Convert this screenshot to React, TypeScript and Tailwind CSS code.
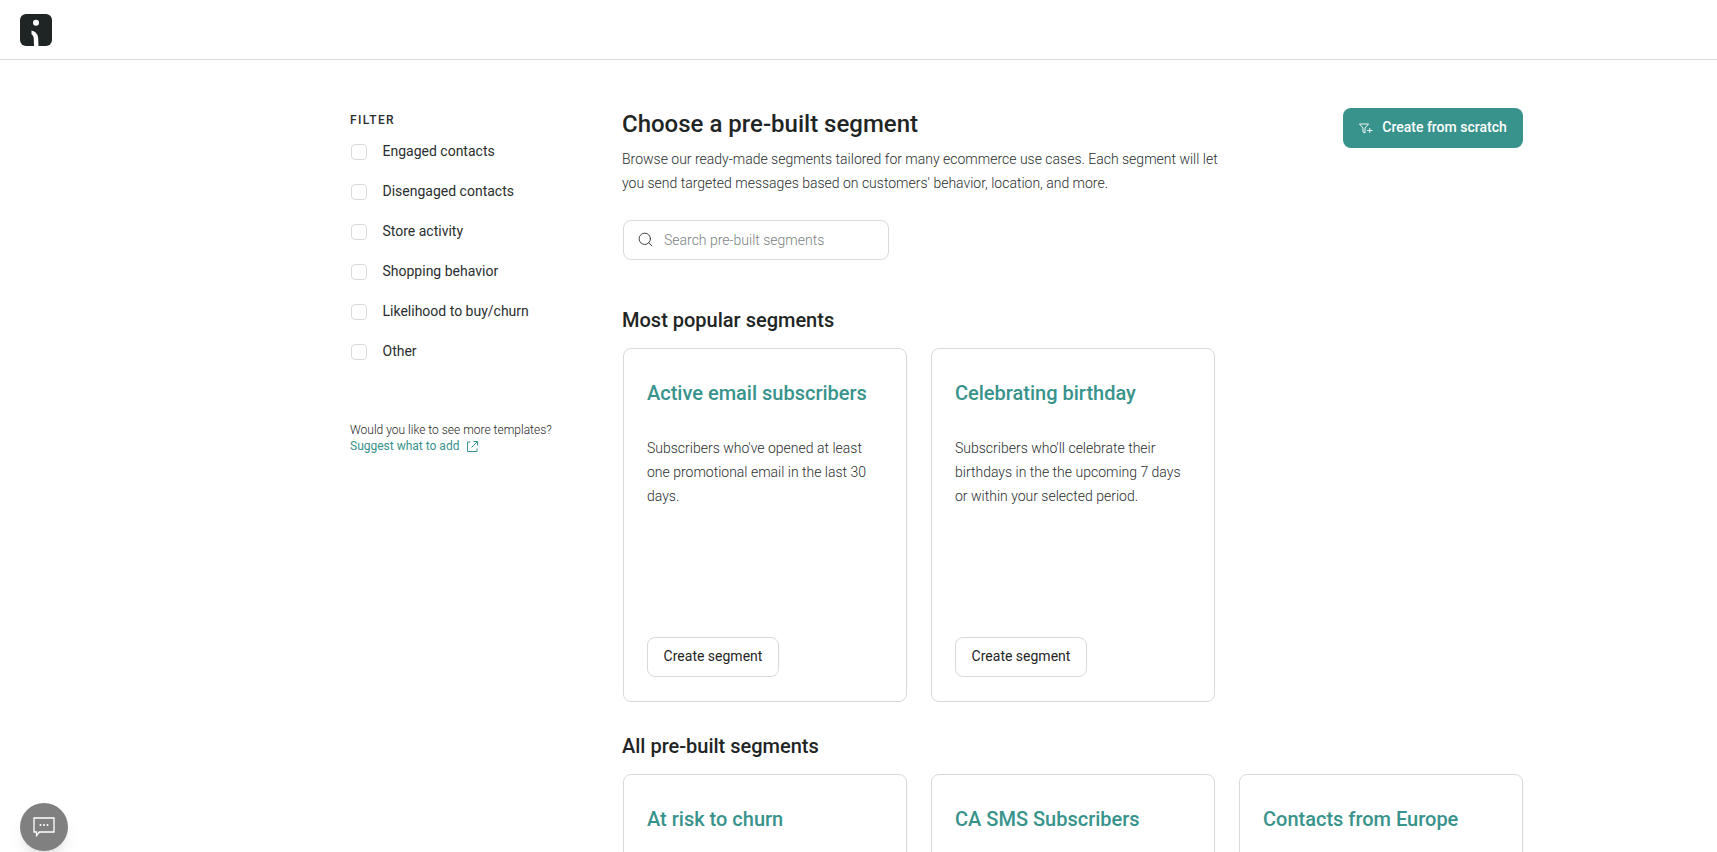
import React from 'react';
import { Search } from 'lucide-react';

const FILTERS = ['Engaged contacts', 'Disengaged contacts', 'Store activity', 'Shopping behavior', 'Likelihood to buy/churn', 'Other'];

const POPULAR = [
    { title: 'Active email subscribers', text: "Subscribers who've opened at least one promotional email in the last 30 days." },
    { title: 'Celebrating birthday', text: "Subscribers who'll celebrate their birthdays in the the upcoming 7 days or within your selected period." },
];

// Only the titles of this row are above the fold
const ALL = ['At risk to churn', 'CA SMS Subscribers', 'Contacts from Europe'];

const SegmentCard: React.FC<{ title: string; text?: string }> = ({ title, text }) => (
    <div className="w-[284px] h-[354px] shrink-0 flex flex-col bg-white border border-[#d9d9d9] rounded-lg pl-[23px] pr-6 pt-[30px] pb-6">
        <h3 className="text-[20px] leading-[28px] font-medium text-[#38938c]">{title}</h3>
        {text && (
            <>
                <p className="mt-[29px] text-[14px] leading-[24px] font-light text-[#2a2e2e]">{text}</p>
                <button className="mt-auto w-[132px] h-10 pb-[2px] bg-white border border-[#d9d9d9] rounded-lg text-[14px] text-[#1f2525]">
                    Create segment
                </button>
            </>
        )}
    </div>
);

export default function App() {
    return (
        <div className="h-screen overflow-hidden bg-white font-['Roboto',sans-serif] text-[#1f2525]">
            <header className="h-[60px] border-b border-[#d9d9d9] flex items-center pl-5">
                <svg width="32" height="32" viewBox="0 0 32 32">
                    <rect width="32" height="32" rx="6" fill="#1f2525" />
                    <circle cx="16" cy="8.7" r="3" fill="#fff" />
                    <path d="M11.5 16.5C15.5 17.5 18 20 18.2 24.5L18.5 32H14L13.8 25C13.7 22.5 12.8 21 11.5 20.3Z" fill="#fff" />
                </svg>
            </header>

            <div className="ml-[350px] w-[1173px] pt-12 flex">
                {/* Filter sidebar */}
                <aside className="w-[273px] shrink-0">
                    <div className="text-[12px] leading-[22px] pt-px -mb-px font-medium tracking-[1.4px] text-[#2a2e2e]">FILTER</div>
                    <div className="mt-[10px] flex flex-col gap-4">
                        {FILTERS.map(f => (
                            <label key={f} className="h-6 flex items-center pl-px">
                                <span className="w-4 h-4 border border-[#d9d9d9] rounded-[4px] bg-white shrink-0" />
                                <span className="ml-[15.5px] text-[14px] leading-[22px] mb-[2px] text-[#2a2e2e]">{f}</span>
                            </label>
                        ))}
                    </div>
                    <div className="mt-[58px] text-[12px] leading-4 font-light">
                        <div className="text-[#1f2525]">Would you like to see more templates?</div>
                        <a className="flex items-center font-normal text-[#38938c]">
                            Suggest what to add
                            <svg className="ml-2" width="11" height="11" viewBox="0 0 11 11" fill="none" stroke="#38938c" strokeWidth="1">
                                <path d="M3.5 1H.5V10.5H10V7.5" />
                                <path d="M4.5 6.5L10 1M6.5 .5H10.5V4.5" />
                            </svg>
                        </a>
                    </div>
                </aside>

                <main className="w-[900px] shrink-0">
                    <div className="flex items-start justify-between">
                        <div className="-ml-px">
                            <h1 className="text-[24px] leading-8 font-medium">Choose a pre-built segment</h1>
                            <p className="mt-[7px] w-[600px] text-[14px] leading-6 font-light text-[#2a2e2e]">
                                Browse our ready-made segments tailored for many ecommerce use cases. Each segment will let you send targeted messages based on customers' behavior, location, and more.
                            </p>
                        </div>
                        <button className="w-[180px] h-10 pb-[2px] rounded-lg bg-[#38938c] text-white text-[14px] font-medium flex items-center justify-center gap-[9px]">
                            <svg className="mt-[2px]" width="14" height="11" viewBox="0 0 14 11" fill="none" stroke="#fff" strokeWidth="0.9">
                                <path d="M.5 1H9.5L6 5V10L4 9V5Z" />
                                <path d="M8 7.5H13.5M10.75 5V10" />
                            </svg>
                            Create from scratch
                        </button>
                    </div>

                    <div className="mt-[25px] w-[266px] h-10 border border-[#d9d9d9] rounded-lg flex items-center pl-[13px]">
                        <Search className="w-[17px] h-[17px] -mt-px text-[#2a2e2e] shrink-0" strokeWidth={1.25} />
                        <input
                            placeholder="Search pre-built segments"
                            className="ml-[10px] w-[220px] text-[14px] font-light outline-none placeholder:text-[#7a7f7f]"
                        />
                    </div>

                    <h2 className="mt-[46px] -ml-px text-[20px] leading-7 font-medium">Most popular segments</h2>
                    <div className="mt-[14px] flex gap-6">
                        {POPULAR.map(c => <SegmentCard key={c.title} {...c} />)}
                    </div>

                    <h2 className="mt-[30px] -ml-px text-[20px] leading-7 font-medium">All pre-built segments</h2>
                    <div className="mt-[14px] flex gap-6">
                        {ALL.map(t => <SegmentCard key={t} title={t} />)}
                    </div>
                </main>
            </div>

            {/* Chat launcher */}
            <button className="fixed left-5 bottom-px w-12 h-12 rounded-full bg-[#808080] shadow-lg flex items-center justify-center">
                <svg width="22" height="20" viewBox="0 0 22 20" fill="none">
                    <path d="M1 1H21V15H6.5L3.5 18.5V15H1Z" stroke="#fff" strokeWidth="1.3" />
                    <circle cx="7.5" cy="8" r="1" fill="#fff" />
                    <circle cx="11" cy="8" r="1" fill="#fff" />
                    <circle cx="14.5" cy="8" r="1" fill="#fff" />
                </svg>
            </button>
        </div>
    );
}
